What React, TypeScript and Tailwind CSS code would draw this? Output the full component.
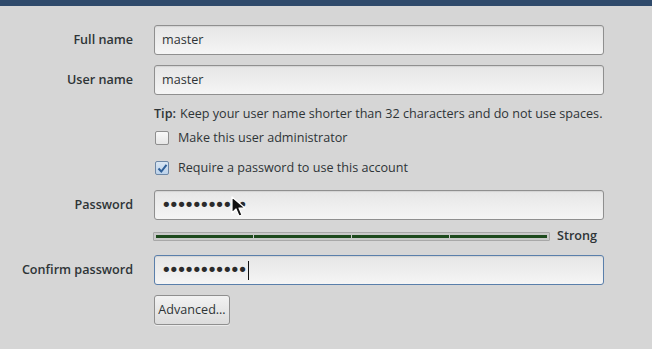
import { useState } from "react";

const FONT = "font-['Open_Sans',sans-serif]";

function Field({ label, children, focused = false }: { label: string; children: React.ReactNode; focused?: boolean }) {
  return (
    <div className="flex items-center h-[30px]">
      <div className="w-[133px] text-right text-[12.6px] font-semibold text-[#2e3436] shrink-0">{label}</div>
      <div
        className={`ml-[21px] w-[450px] h-[30px] rounded-[3px] border flex items-center px-[7px] text-[12.6px] text-[#2e3436] bg-gradient-to-b from-[#e6e6e6] to-[#f5f5f5] shadow-[inset_0_1px_1px_rgba(0,0,0,0.08)] ${
          focused ? "border-[#5a7fab]" : "border-[#8f8f8f]"
        }`}
      >
        {children}
      </div>
    </div>
  );
}

function Dots({ n }: { n: number }) {
  return (
    <span className="-ml-[1px] font-['DejaVu_Sans',sans-serif] text-[18px] leading-none text-[#2b2b2b] tracking-[-3px]">
      {"•".repeat(n)}
    </span>
  );
}

function Check({ checked, label, onClick }: { checked: boolean; label: string; onClick: () => void }) {
  return (
    <div className="flex items-center h-[20px] pl-[155px] cursor-default" onClick={onClick}>
      <div
        className={`w-[14px] h-[14px] rounded-[2px] border flex items-center justify-center ${
          checked ? "border-[#6d87a6] bg-gradient-to-b from-[#d9e6f3] to-[#bcd2ea]" : "border-[#8e8e8e] bg-gradient-to-b from-[#f8f8f8] to-[#e6e6e6]"
        }`}
      >
        {checked && (
          <svg width="11" height="11" viewBox="0 0 11 11">
            <path d="M1.5 5.5 L4.3 8.5 L9.5 1.8" fill="none" stroke="#2f5f98" strokeWidth="2" />
          </svg>
        )}
      </div>
      <span className="ml-[9px] text-[12.6px] text-[#2e3436]">{label}</span>
    </div>
  );
}

export default function App() {
  const [admin, setAdmin] = useState(false);
  const [requirePw, setRequirePw] = useState(true);

  return (
    <div className={`w-[652px] h-[349px] bg-[#d6d6d6] overflow-hidden ${FONT}`}>
      <div className="h-[6px] bg-[#2f4a6b]" />
      <div className="mt-[19px] flex flex-col">
        <Field label="Full name">master</Field>
        <div className="mt-[10px]">
          <Field label="User name">master</Field>
        </div>

        <div className="mt-[9px] h-[20px] flex items-center pl-[154px] text-[12.6px] text-[#2e3436] whitespace-nowrap">
          <span className="font-semibold">Tip:</span>
          <span className="ml-[4px]">Keep your user name shorter than 32 characters and do not use spaces.</span>
        </div>

        <div className="mt-[4px]">
          <Check checked={admin} label="Make this user administrator" onClick={() => setAdmin(!admin)} />
        </div>
        <div className="mt-[10px]">
          <Check checked={requirePw} label="Require a password to use this account" onClick={() => setRequirePw(!requirePw)} />
        </div>

        <div className="mt-[12px] relative">
          <Field label="Password">
            <Dots n={11} />
          </Field>
          {/* mouse pointer */}
          <svg className="absolute left-[231px] top-[6px]" width="16" height="22" viewBox="0 0 16 22">
            <path d="M1 1 L1 17 L5 13 L8 20 L11 19 L8 12 L14 12 Z" fill="#111" stroke="#fff" strokeWidth="1.2" strokeLinejoin="round" />
          </svg>
        </div>

        <div className="mt-[8px] h-[16px] flex items-center">
          <div className="ml-[153px] w-[397px] h-[9px] rounded-[1px] border border-[#a8a8a8] bg-[#c9c9c9] py-[2px] px-[2px] flex gap-[1px]">
            <div className="flex-1 bg-[#1d4a1d]" />
            <div className="flex-1 bg-[#1d4a1d]" />
            <div className="flex-1 bg-[#1d4a1d]" />
            <div className="flex-1 bg-[#1d4a1d]" />
          </div>
          <span className="ml-[7px] text-[12.6px] font-semibold text-[#2e3436]">Strong</span>
        </div>

        <div className="mt-[11px]">
          <Field label="Confirm password" focused>
            <Dots n={11} />
            <span className="ml-[3px] w-[1px] h-[19px] bg-[#111]" />
          </Field>
        </div>

        <div className="mt-[10px] pl-[154px]">
          <button className="h-[30px] w-[76px] rounded-[3px] border border-[#8f8f8f] bg-gradient-to-b from-[#f2f2f2] to-[#dcdcdc] text-[12.6px] text-[#2e3436] shadow-[0_1px_0_rgba(255,255,255,0.5)]">
            Advanced…
          </button>
        </div>
      </div>
    </div>
  );
}
